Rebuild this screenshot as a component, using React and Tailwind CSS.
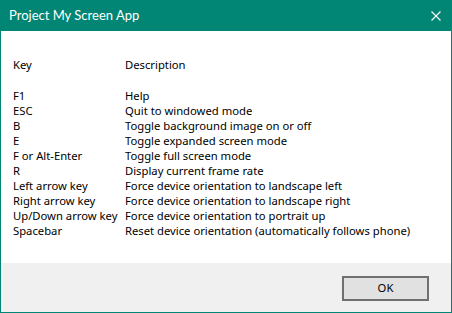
import React from 'react';

const rows = [
  ['F1', 'Help'],
  ['ESC', 'Quit to windowed mode'],
  ['B', 'Toggle background image on or off'],
  ['E', 'Toggle expanded screen mode'],
  ['F or Alt-Enter', 'Toggle full screen mode'],
  ['R', 'Display current frame rate'],
  ['Left arrow key', 'Force device orientation to landscape left'],
  ['Right arrow key', 'Force device orientation to landscape right'],
  ['Up/Down arrow key', 'Force device orientation to portrait up'],
  ['Spacebar', 'Reset device orientation (automatically follows phone)'],
];

export default function App() {
  return (
    <div className="w-[452px] h-[313px] flex flex-col bg-[#018574] font-['Noto_Sans',sans-serif] overflow-hidden">
      <div className="h-[31px] flex items-center justify-between pl-[9px] pr-[11px] shrink-0">
        <span className="text-white text-[13px] leading-none font-['Lato',sans-serif]">Project My Screen App</span>
        <svg width="10" height="10" viewBox="0 0 10 10">
          <path d="M0.5 0.5L9.5 9.5M9.5 0.5L0.5 9.5" stroke="#fff" strokeWidth="1.1" />
        </svg>
      </div>
      <div className="flex-1 flex flex-col mx-px mb-px bg-white">
        <div className="flex-1 pt-[26px] pl-[12px] text-[11.25px] leading-[15px] text-black">
          <div className="grid grid-cols-[112px_1fr]">
            <span>Key</span>
            <span>Description</span>
          </div>
          <div className="h-[16px]" />
          {rows.map(([k, d]) => (
            <div key={k} className="grid grid-cols-[112px_1fr]">
              <span className="whitespace-nowrap">{k}</span>
              <span className="whitespace-nowrap">{d}</span>
            </div>
          ))}
        </div>
        <div className="h-[49px] bg-[#f0f0f0] flex items-center justify-end pr-[22px] shrink-0">
          <button className="w-[87px] h-[25px] bg-[#e1e1e1] border-2 border-[#707070] text-[11.25px] text-black mt-[1px]">
            OK
          </button>
        </div>
      </div>
    </div>
  );
}
